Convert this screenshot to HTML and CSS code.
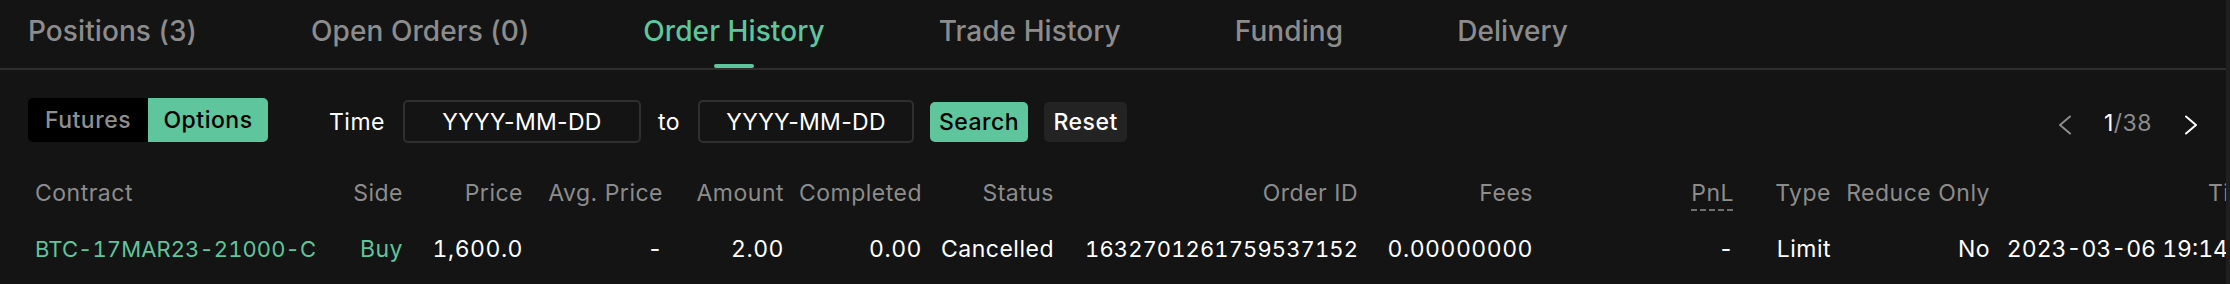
FILE: index.html
```html
<!DOCTYPE html>
<html lang="en">
<head>
<meta charset="utf-8">
<title>Order History</title>
<link rel="stylesheet" href="styles.css">
</head>
<body>
<div class="app">
  <nav class="tabs">
    <div class="tab">Positions (3)</div>
    <div class="tab">Open Orders (0)</div>
    <div class="tab active">Order History</div>
    <div class="tab">Trade History</div>
    <div class="tab">Funding</div>
    <div class="tab">Delivery</div>
  </nav>

  <div class="filters">
    <div class="seg">
      <div class="seg-btn">Futures</div>
      <div class="seg-btn on">Options</div>
    </div>
    <span class="label time-label">Time</span>
    <div class="date d1">YYYY-MM-DD</div>
    <span class="label to">to</span>
    <div class="date d2">YYYY-MM-DD</div>
    <div class="btn primary search">Search</div>
    <div class="btn reset">Reset</div>
    <div class="pager">
      <svg class="chev" width="14" height="20" viewBox="0 0 14 20"><polyline points="12,1.5 2,10 12,18.5" fill="none" stroke="#8c8c8c" stroke-width="2" stroke-linecap="round" stroke-linejoin="round"/></svg>
      <span class="pages"><span class="cur">1</span>/38</span>
      <svg class="chev" width="14" height="20" viewBox="0 0 14 20"><polyline points="2,1.5 12,10 2,18.5" fill="none" stroke="#ffffff" stroke-width="2" stroke-linecap="round" stroke-linejoin="round"/></svg>
    </div>
  </div>

  <div class="table">
    <div class="row thead">
      <div>Contract</div>
      <div>Side</div>
      <div>Price</div>
      <div>Avg. Price</div>
      <div>Amount</div>
      <div>Completed</div>
      <div>Status</div>
      <div>Order ID</div>
      <div>Fees</div>
      <div><span class="pnl">PnL</span></div>
      <div>Type</div>
      <div>Reduce Only</div>
      <div>Time</div>
    </div>
    <div class="row tbody">
      <div class="green code">BTC-17MAR23-21000-C</div>
      <div class="green">Buy</div>
      <div class="tn">1,600.0</div>
      <div class="tn">-</div>
      <div class="tn">2.00</div>
      <div class="tn">0.00</div>
      <div>Cancelled</div>
      <div class="code">1632701261759537152</div>
      <div class="tn">0.00000000</div>
      <div class="tn">-</div>
      <div>Limit</div>
      <div>No</div>
      <div class="stamp">2023-03-06 19:14:23</div>
    </div>
  </div>
</div>
</body>
</html>
```

FILE: styles.css
```css
* {
  box-sizing: border-box;
  margin: 0;
  padding: 0;
}

html, body {
  height: 100%;
}

body {
  background: #1f1f1f;
  font-family: Inter, "Noto Sans", "Liberation Sans", sans-serif;
  color: #ffffff;
  overflow: hidden;
}

.app {
  width: 2226px;
  height: 284px;
  background: #141414;
  overflow: hidden;
}

/* Tabs */
.tabs {
  display: flex;
  gap: 114px;
  height: 70px;
  padding-left: 28px;
  border-bottom: 2px solid #2e2e2e;
}

.tab {
  position: relative;
  padding-top: 13.7px;
  font-size: 28px;
  font-weight: 500;
  line-height: 34px;
  letter-spacing: 0.08px;
  color: #8c8c8c;
  white-space: nowrap;
}

.tab.active {
  color: #5ec59c;
}

.tab.active::after {
  content: "";
  position: absolute;
  left: 50%;
  bottom: 0;
  width: 40px;
  height: 4px;
  margin-left: -20px;
  border-radius: 2px;
  background: #5ec59c;
}

/* Filters */
.filters {
  display: flex;
  align-items: center;
  min-height: 47px;
  margin-top: 28px;
  padding: 0 28px;
  font-size: 23px;
  letter-spacing: 0.5px;
}

.seg {
  display: flex;
  align-self: flex-start;
  height: 44px;
  border-radius: 5px;
  overflow: hidden;
  background: #000000;
}

.seg-btn {
  width: 120px;
  font-weight: 500;
  line-height: 44px;
  text-align: center;
  color: #8f8f8f;
}

.seg-btn.on {
  background: #5ec59c;
  color: #000000;
}

.label {
  color: #ffffff;
  white-space: nowrap;
}

.time-label {
  margin-left: 61px;
  margin-right: 18px;
}

.to {
  margin: 0 18px 0 17px;
}

.date {
  display: flex;
  align-items: center;
  justify-content: center;
  height: 43px;
  border: 2px solid #2f2f2f;
  border-radius: 5px;
  letter-spacing: 0.3px;
  color: #ffffff;
  white-space: nowrap;
}

.d1 {
  width: 238px;
}

.d2 {
  width: 216px;
}

.btn {
  height: 40px;
  margin-left: 16px;
  border-radius: 5px;
  font-weight: 500;
  line-height: 40px;
  text-align: center;
  background: #232323;
  color: #ffffff;
}

.btn.primary {
  background: #5ec59c;
  color: #000000;
}

.search {
  width: 98px;
}

.reset {
  width: 83px;
}

.pager {
  display: flex;
  align-items: center;
  gap: 32px;
  margin-left: auto;
  margin-top: 2px;
  color: #8c8c8c;
}

.pager .cur {
  color: #ffffff;
}

.chev {
  display: block;
  margin-top: 5px;
}

/* Table */
.table {
  margin-top: 20px;
}

.row {
  display: grid;
  grid-template-columns: 302px 73px 120px 140px 121px 138px 132px 304px 175px 201px 97px 159px 274px;
  align-items: center;
  height: 56px;
  padding-left: 28px;
  font-size: 23px;
  letter-spacing: 0.5px;
  white-space: nowrap;
}

.row > div {
  text-align: right;
}

.row > div:first-child {
  padding-left: 7px;
  text-align: left;
}

.thead {
  color: #8c8c8c;
}

.tbody {
  color: #ffffff;
}

.green {
  color: #5ec59c;
}

.tn {
  font-variant-numeric: tabular-nums;
}

.code {
  font-size: 22px;
  letter-spacing: 0.1px;
  font-variant-numeric: tabular-nums;
}

.stamp {
  letter-spacing: 0;
  font-variant-numeric: tabular-nums;
}

.pnl {
  position: relative;
}

.pnl::after {
  content: "";
  position: absolute;
  left: 0;
  right: 0;
  bottom: -4px;
  height: 2px;
  background: repeating-linear-gradient(90deg, #6f6f6f 0 6px, transparent 6px 9px);
}
```
